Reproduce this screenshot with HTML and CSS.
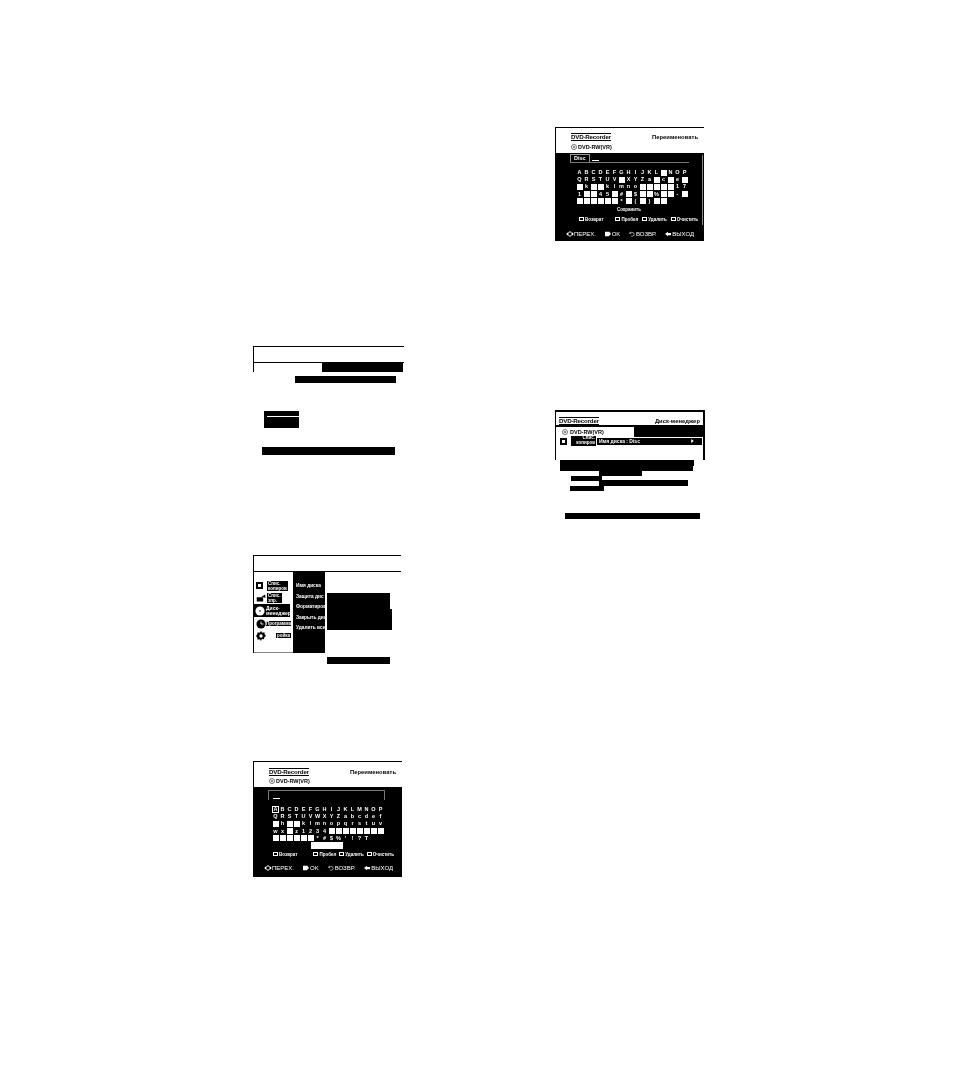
FILE: index.html
```html
<!DOCTYPE html>
<html lang="ru">
<head>
<meta charset="utf-8">
<title>DVD-Recorder</title>
<link rel="stylesheet" href="styles.css">
</head>
<body>
<main class="page">

<!-- Rename screen, top right -->
<section class="tv tv-a">
  <header class="tv-head">
    <div class="title-row"><span class="brand">DVD-Recorder</span><span class="screen">Переименовать</span></div>
    <div class="disc-row"><svg class="disc" viewBox="0 0 8 8"><circle cx="4" cy="4" r="3.4"/><circle cx="4" cy="4" r="1"/></svg><span>DVD-RW(VR)</span></div>
  </header>
  <div class="field field-a"><span class="tab">Disc</span><span class="cursor"></span></div>
  <div class="kb">
    <b>A</b><b>B</b><b>C</b><b>D</b><b>E</b><b>F</b><b>G</b><b>H</b><b>I</b><b>J</b><b>K</b><b>L</b><i></i><b>N</b><b>O</b><b>P</b>
    <b>Q</b><b>R</b><b>S</b><b>T</b><b>U</b><b>V</b><i></i><b>X</b><b>Y</b><b>Z</b><b>a</b><i></i><b>c</b><i></i><b>e</b><i></i>
    <i></i><b>k</b><i></i><i></i><b>k</b><b>l</b><b>m</b><b>n</b><b>o</b><i></i><i></i><i></i><i></i><i></i><b>1</b><b>7</b>
    <b>1</b><i></i><i></i><b>4</b><b>5</b><i></i><b>#</b><i></i><b>$</b><i></i><i></i><b>%</b><i></i><i></i><b>-</b><i></i>
    <i></i><i></i><i></i><i></i><i></i><i></i><b>*</b><i></i><b>(</b><i></i><b>)</b><i></i><i></i><b></b><b></b><b></b>
  </div>
  <div class="save save-a">Сохранить</div>
  <div class="legend legend-a">
    <span><em></em>Возврат</span><span><em></em>Пробел</span><span><em></em>Удалить</span><span><em></em>Очистить</span>
  </div>
  <footer class="keys keys-a">
    <span><svg viewBox="0 0 10 8"><path d="M0 4l3-3v6zM10 4L7 1v6zM5 0l2 2H3zM5 8L3 6h4z"/></svg>ПЕРЕХ.</span>
    <span><svg viewBox="0 0 8 8"><path d="M0 1h6l2 3-3 3H0z"/></svg>OK</span>
    <span><svg viewBox="0 0 8 8" class="line"><path d="M2 1L.8 3 3 4M1 3c3-2 6-1 6 1.500S4 7 3 7"/></svg>ВОЗВР.</span>
    <span><svg viewBox="0 0 8 8"><path d="M0 4l4-3v1.500h4v3H4V7z"/></svg>ВЫХОД</span>
  </footer>
</section>

<!-- Disc manager, right -->
<section class="frag frag-b">
  <div class="b-head"><span class="brand brand-b">DVD-Recorder</span><span class="screen">Диск-менеджер</span></div>
  <div class="b-disc"><svg class="disc" viewBox="0 0 8 8"><circle cx="4" cy="4" r="3.4"/><circle cx="4" cy="4" r="1"/></svg><span>DVD-RW(VR)</span></div>
  <div class="b-row">
    <span class="film"></span>
    <span class="b-label">Спис.<br>копиров</span>
    <span class="b-item"><span>Имя диска : Disc</span><svg class="tri" viewBox="0 0 4 6"><path d="M0 0l4 3-4 3z"/></svg></span>
  </div>
</section>
<div class="bar b1"></div><div class="bar b2"></div><div class="bar b3"></div><div class="bar b4"></div><div class="bar b5"></div><div class="bar b6"></div><div class="bar b7"></div>

<!-- Empty redacted frame -->
<section class="frag frag-c"><div class="c-head"></div></section>
<div class="bar c1"></div><div class="bar c2"></div><div class="bar c3"></div><div class="c3-line"></div><div class="bar c4"></div>

<!-- Main menu -->
<section class="frag frag-d">
  <div class="d-head"></div>
  <div class="d-body">
    <nav class="side">
      <div class="side-item"><span class="film"></span><span class="side-label">Спис.<br>копиров</span></div>
      <div class="side-item"><svg viewBox="0 0 14 12"><path d="M1 5h9v6H1zM8 4l5-3v5z"/></svg><span class="side-label">Спис.<br>зпр.</span></div>
      <div class="side-item side-on"><svg viewBox="0 0 12 12"><circle cx="6" cy="6" r="5.500" fill="#fff"/><circle cx="6" cy="6" r="1" fill="#000"/></svg><span>Диск-<br>менеджер</span></div>
      <div class="side-item"><svg viewBox="0 0 12 12"><circle cx="6" cy="6" r="5.500"/><path d="M6 3v3h3" stroke="#fff" fill="none"/></svg><span class="side-plain">Программа</span></div>
      <div class="side-item"><svg viewBox="0 0 12 12"><path d="M6 0l1.500 2 2.500-.5.500 2.500 1.500 2-2 1.500-.5 2.500-2.500-.5L6 12l-1.500-2-2.500.5L1.500 8 0 6l1.500-2L2 1.500l2.500.5z"/><circle cx="6" cy="6" r="2" fill="#fff"/></svg><span class="side-label side-set">pойка</span></div>
    </nav>
    <ul class="menu">
      <li class="menu-on">Имя диска</li><li>Защита дис</li><li>Форматиров</li><li>Закрыть дис</li><li>Удалить все</li>
    </ul>
  </div>
</section>
<div class="bar d1"></div><div class="bar d2"></div><div class="bar d3"></div>

<!-- Rename screen, bottom -->
<section class="tv tv-e">
  <header class="tv-head">
    <div class="title-row title-e"><span class="brand">DVD-Recorder</span><span class="screen">Переименовать</span></div>
    <div class="disc-row disc-e"><svg class="disc" viewBox="0 0 8 8"><circle cx="4" cy="4" r="3.4"/><circle cx="4" cy="4" r="1"/></svg><span>DVD-RW(VR)</span></div>
  </header>
  <div class="field field-e"><span class="cursor"></span></div>
  <div class="kb kb-e">
    <b class="sel">A</b><b>B</b><b>C</b><b>D</b><b>E</b><b>F</b><b>G</b><b>H</b><b>I</b><b>J</b><b>K</b><b>L</b><b>M</b><b>N</b><b>O</b><b>P</b>
    <b>Q</b><b>R</b><b>S</b><b>T</b><b>U</b><b>V</b><b>W</b><b>X</b><b>Y</b><b>Z</b><b>a</b><b>b</b><b>c</b><b>d</b><b>e</b><b>f</b>
    <i></i><b>h</b><i></i><i></i><b>k</b><b>l</b><b>m</b><b>n</b><b>o</b><b>p</b><b>q</b><b>r</b><b>s</b><b>t</b><b>u</b><b>v</b>
    <b>w</b><b>x</b><i></i><b>z</b><b>1</b><b>2</b><b>3</b><b>4</b><i></i><i></i><i></i><i></i><i></i><i></i><i></i><i></i>
    <i></i><i></i><i></i><i></i><i></i><i></i><b>*</b><b>#</b><b>$</b><b>%</b><b>'</b><b>!</b><b>?</b><b>T</b><b></b><b></b>
  </div>
  <div class="save save-e"></div>
  <div class="legend legend-e">
    <span><em></em>Возврат</span><span><em></em>Пробел</span><span><em></em>Удалить</span><span><em></em>Очистить</span>
  </div>
  <footer class="keys keys-e">
    <span><svg viewBox="0 0 10 8"><path d="M0 4l3-3v6zM10 4L7 1v6zM5 0l2 2H3zM5 8L3 6h4z"/></svg>ПЕРЕХ.</span>
    <span><svg viewBox="0 0 8 8"><path d="M0 1h6l2 3-3 3H0z"/></svg>OK</span>
    <span><svg viewBox="0 0 8 8" class="line"><path d="M2 1L.8 3 3 4M1 3c3-2 6-1 6 1.500S4 7 3 7"/></svg>ВОЗВР.</span>
    <span><svg viewBox="0 0 8 8"><path d="M0 4l4-3v1.500h4v3H4V7z"/></svg>ВЫХОД</span>
  </footer>
</section>

</main>
</body>
</html>
```
FILE: styles.css
```css
* { box-sizing: border-box; }
html, body { margin: 0; padding: 0; background: #fff; }
.page {
  position: relative;
  width: 954px;
  height: 1080px;
  overflow: hidden;
  background: #fff;
  color: #000;
  font-family: "Liberation Sans", Arial, sans-serif;
  font-size: 5px;
  filter: grayscale(1);
}

/* free-canvas fragments of the scanned page */
.tv, .frag, .bar, .c3-line { position: absolute; }
.bar { background: #000; }

/* rename screen */
.tv {
  background: #000;
  color: #fff;
  display: flex;
  flex-direction: column;
  width: 150px;
}
.tv > * { flex: none; }
.tv-a { left: 555px; top: 127px; height: 114px; border-right: 1px solid #fff; }
.tv-a::after { content: ""; position: absolute; right: 1px; top: 28px; height: 70px; width: 1px; background: #888; }
.tv-e { left: 253px; top: 761px; height: 116px; border-right: 1px solid #fff; }
.tv-head {
  background: #fff;
  color: #000;
  height: 26px;
  padding: 3px 6px 0 15px;
  border-top: 1px solid #000;
  border-left: 1px solid #000;
}
.title-row { display: flex; justify-content: space-between; align-items: center; height: 11px; }
.title-e { height: 13px; }
.brand {
  font-weight: 700;
  font-size: 6.200px;
  letter-spacing: -.2px;
  line-height: 6px;
  border-top: 1px solid #000;
  border-bottom: 1px solid #000;
}
.screen { font-weight: 700; font-size: 5.800px; letter-spacing: .05px; }
.disc-row { display: flex; align-items: center; gap: 1px; font-size: 5.500px; font-weight: 700; padding-top: 2px; }
.disc-e { padding-top: 0; }
.disc { width: 6px; height: 6px; fill: none; stroke: #000; stroke-width: .7; }

.field { display: flex; align-items: flex-end; }
.field-a { height: 10px; margin: 0 15px 0 15px; border-bottom: 1px solid #777; }
.tab { background: #000; border: 1px solid #999; border-bottom: 0; font-size: 5.500px; font-weight: 700; padding: 0 3px; line-height: 7px; color: #fff; }
.cursor { width: 7px; height: 1px; background: #fff; margin: 0 0 1px 2px; }
.field-e { height: 10px; margin: 3px 17px 0 15px; border: 1px solid #777; border-bottom: 0; padding-left: 2px; }

.kb {
  display: grid;
  grid-template-columns: repeat(16, 7px);
  grid-auto-rows: 7.200px;
  margin: 6px 0 0 21px;
  font-size: 5.500px;
  font-weight: 700;
  line-height: 7px;
  text-align: center;
}
.kb-e { margin: 6px 0 0 19px; }
.kb b { display: block; }
.kb i { display: block; background: #fff; margin: .5px; }
.kb .sel { outline: 1px solid #fff; outline-offset: -1px; }

.save { height: 7px; text-align: center; }
.save-a { font-size: 4.500px; font-weight: 700; line-height: 7px; margin: 1px 0 0 -1px; }
.save-e { background: #fff; width: 32px; margin: 0 0 0 58px; }

.legend { display: flex; align-items: center; font-size: 4.500px; font-weight: 700; }
.legend span { display: flex; align-items: center; gap: 1px; }
.legend em { width: 5px; height: 4px; border: 1px solid #fff; background: #000; display: block; }
.legend-a { margin: 4px 0 0 24px; gap: 4px; }
.legend-a span:first-child { margin-right: 8px; }
.legend-e { margin: 3px 0 0 20px; gap: 3px; }
.legend-e span:first-child { margin-right: 13px; }

.keys { display: flex; align-items: center; justify-content: space-between; font-size: 6px; font-weight: 400; letter-spacing: 0; }
.keys span { display: flex; align-items: center; gap: 0; }
.keys svg { height: 6px; width: 8px; fill: #fff; }
.keys svg.line { fill: none; stroke: #fff; stroke-width: .8; }
.keys-a { margin: 9px 10px 0 11px; }
.keys-e { margin: 8px 9px 0 11px; }

/* disc manager */
.frag-b {
  left: 555px; top: 410px; width: 150px; height: 50px;
  border-top: 2px solid #000;
  border-left: 1px solid #000;
  border-right: 2px solid #000;
}
.b-head { display: flex; justify-content: space-between; align-items: center; padding: 4px 3px 0 3px; height: 15px; border-bottom: 2px solid #000; }
.b-disc { display: flex; align-items: center; gap: 2px; height: 9px; font-size: 5.500px; font-weight: 700; padding-left: 6px; width: 79px; position: relative; }
.frag-b::after { content: ""; position: absolute; left: 78px; top: 15px; right: 0; height: 10px; background: #000; }
.b-row { display: flex; align-items: center; position: relative; z-index: 1; height: 10px; }
.film { width: 7px; height: 7px; border: 2px solid #000; display: block; flex: none; background: #fff; }
.b-row .film { margin-left: 4px; }
.b-label { background: #000; color: #fff; font-size: 4.500px; line-height: 4.500px; font-weight: 700; text-align: right; margin-left: 4px; padding: 0 1px; width: 25px; height: 10px; }
.b-item { flex: 1; background: #000; color: #fff; border: 1px solid #fff; display: flex; justify-content: space-between; align-items: center; font-size: 5px; font-weight: 700; height: 9px; padding: 0 8px 0 2px; }
.tri { width: 3px; height: 4px; fill: #fff; }
.b1 { left: 560px; top: 460px; width: 134px; height: 6px; }
.b2 { left: 560px; top: 466px; width: 133px; height: 5px; }
.b3 { left: 599px; top: 471px; width: 43px; height: 5px; }
.b4 { left: 571px; top: 476px; width: 31px; height: 5px; }
.b5 { left: 599px; top: 480px; width: 89px; height: 6px; }
.b6 { left: 570px; top: 486px; width: 34px; height: 5px; }
.b7 { left: 565px; top: 513px; width: 135px; height: 6px; }

/* redacted frame */
.frag-c { left: 253px; top: 346px; width: 151px; height: 26px; border-top: 1px solid #000; border-left: 1px solid #000; }
.c-head { height: 16px; border-bottom: 1px solid #000; }
.c1 { left: 322px; top: 362px; width: 81px; height: 10px; }
.c2 { left: 295px; top: 376px; width: 101px; height: 7px; }
.c3 { left: 264px; top: 411px; width: 35px; height: 17px; }
.c3-line { left: 267px; top: 416px; width: 32px; height: 1px; background: #fff; }
.c4 { left: 262px; top: 447px; width: 133px; height: 8px; }

/* main menu */
.frag-d { left: 253px; top: 555px; width: 148px; height: 98px; border-top: 1px solid #000; border-left: 1px solid #000; }
.d-head { height: 16px; border-bottom: 1px solid #000; }
.d-body { display: flex; align-items: stretch; height: 81px; padding-top: 8px; }
.side { width: 39px; display: flex; flex-direction: column; gap: 1px; border-bottom: 1px solid #888; }
.side-item { display: flex; align-items: center; gap: 1px; height: 11px; font-size: 5px; font-weight: 700; line-height: 5px; padding-left: 2px; flex: none; }
.side-item svg { width: 10px; height: 10px; flex: none; }
.side-item .film { margin-right: 3px; }
.side-label { background: #000; color: #fff; padding: 0 1px; font-size: 4.500px; line-height: 5px; }
.side-on { background: #000; color: #fff; height: 13px; margin-right: 3px; padding-left: 1px; }
.side-plain { font-size: 4.500px; background: #000; color: #fff; margin-left: -1px; }
.side-set { margin-left: 9px; }
.menu { list-style: none; margin: -8px 0 0 0; padding: 9px 0 0 3px; width: 32px; background: #000; color: #fff; font-size: 4.800px; font-weight: 700; overflow: hidden; white-space: nowrap; }
.menu li { height: 10.500px; line-height: 10px; }
.d1 { left: 327px; top: 593px; width: 63px; height: 16px; }
.d2 { left: 327px; top: 609px; width: 65px; height: 21px; }
.d3 { left: 327px; top: 657px; width: 63px; height: 7px; }
```
